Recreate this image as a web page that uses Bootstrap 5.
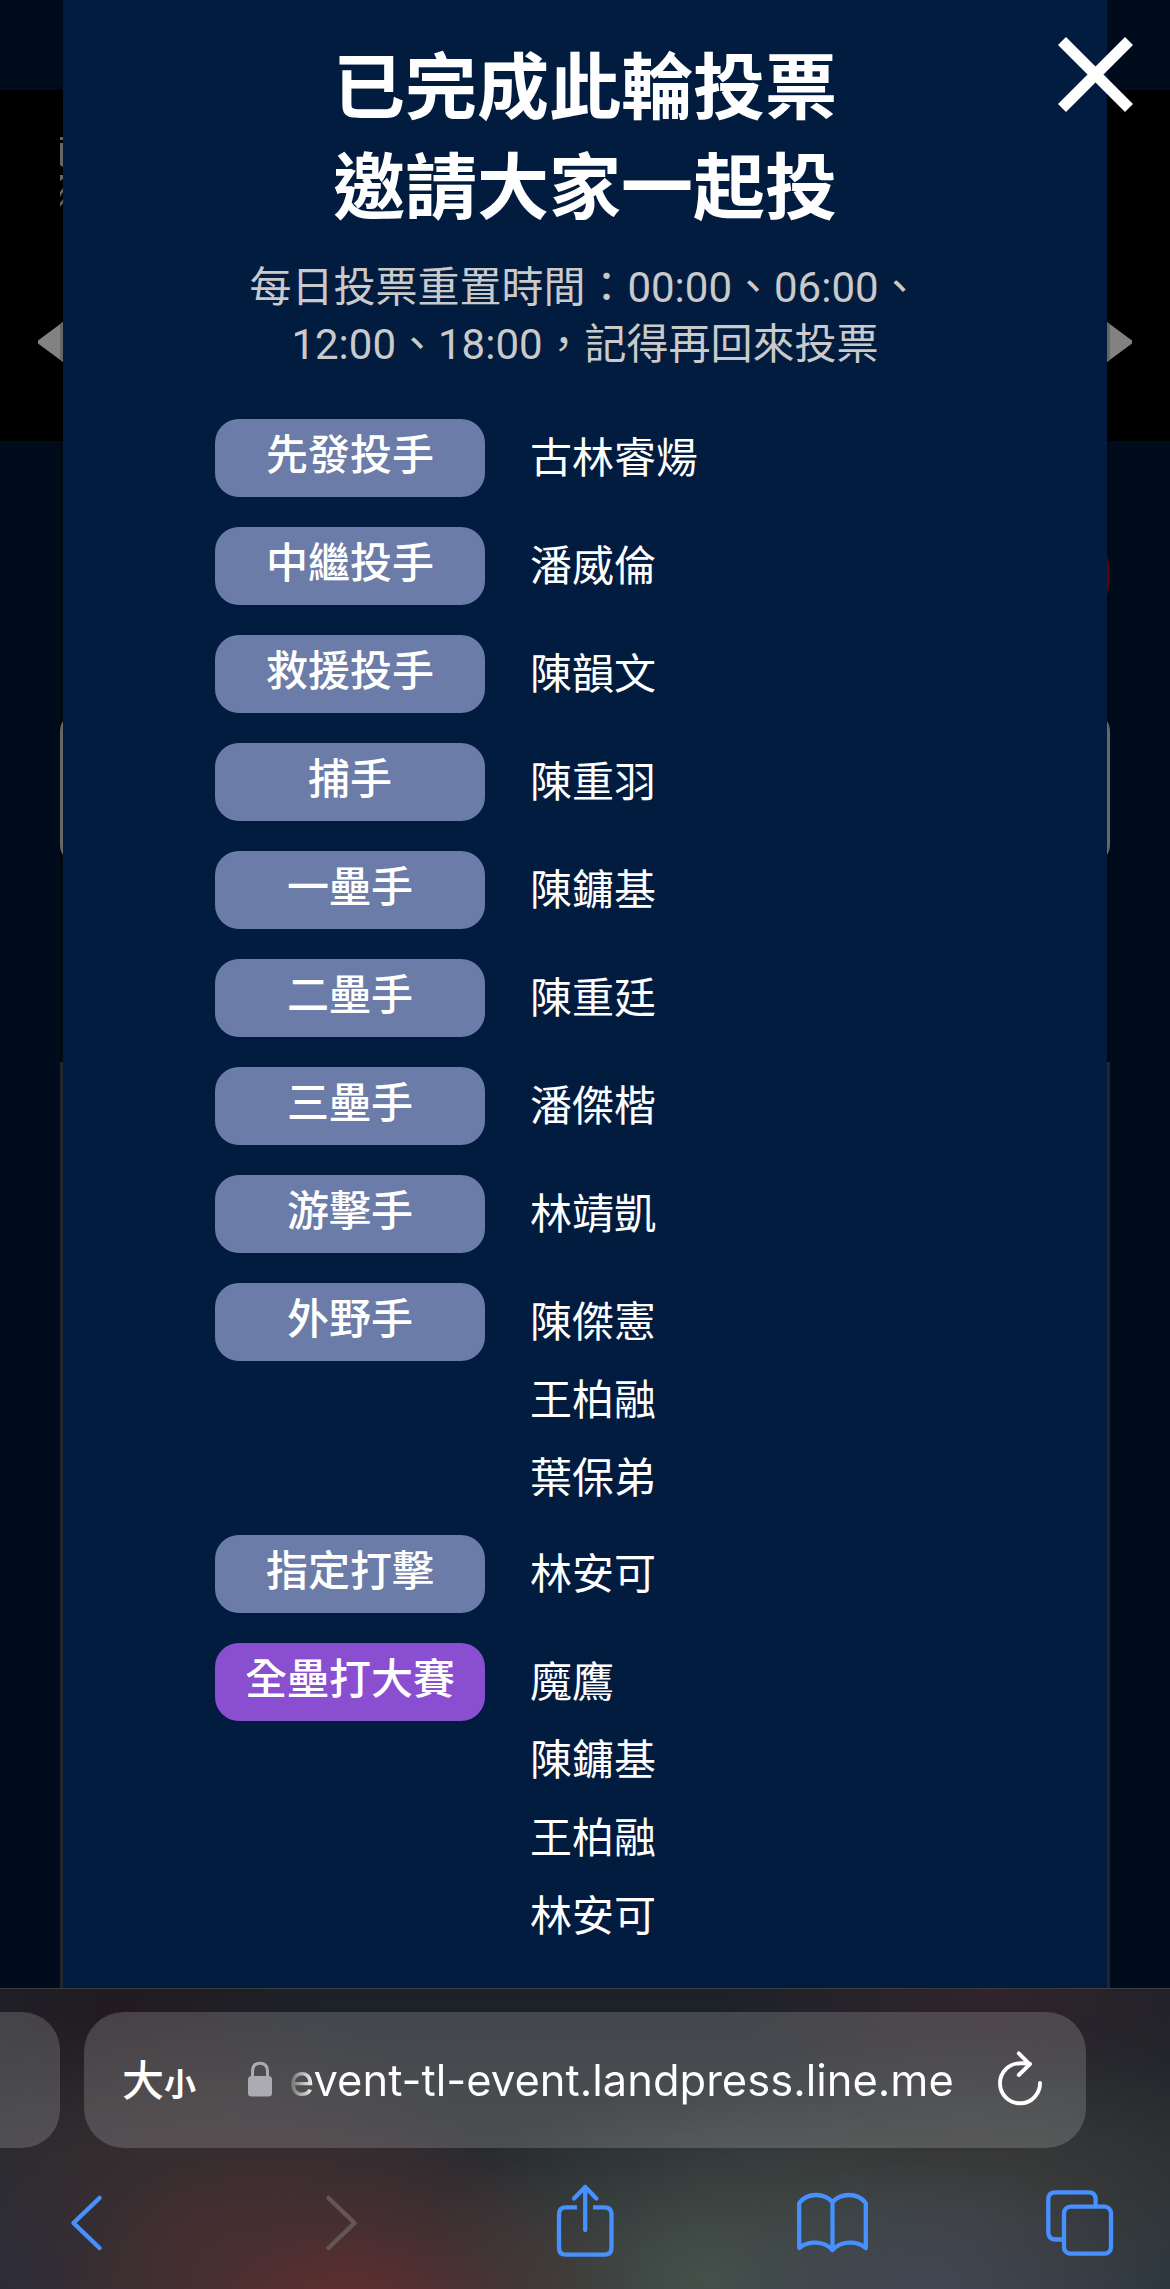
<!DOCTYPE html>
<html lang="zh-Hant">
<head>
<meta charset="utf-8">
<meta name="viewport" content="width=device-width, initial-scale=1">
<title>投票完成</title>
<link href="https://cdn.jsdelivr.net/npm/bootstrap@5.3.0/dist/css/bootstrap.min.css" rel="stylesheet">
<style>
  body { background: #000c1c; color: #fff; font-family: Roboto, "Noto Sans CJK TC", sans-serif; font-size: 42px; }
  .screen { width: 1170px; height: 2289px; }
  .viewport-area { height: 1988px; }

  /* dimmed page behind the dialog */
  .page-behind { z-index: 0; }
  .behind-header { height: 90px; }
  .behind-banner { height: 351px; background: #000; padding: 152px 38px 0; }
  .behind-banner svg { width: 25px; height: 40px; margin-top: 80px; }
  .behind-main { width: 1050px; background: #000810; }
  .behind-button { width: 144px; height: 144px; background: #5c0013; margin-top: 62px; }
  .behind-input { height: 150px; margin-top: 66px; background: #696765; border-radius: 18px; }
  .behind-panel { margin-top: 199px; background: #20262c; }
  .behind-glyphs { left: 60px; top: 137px; width: 3px; height: 70px; z-index: 1; }

  /* dialog */
  .vote-dialog { width: 1044px; background: #021c40; padding: 39px 0 0; z-index: 2; }
  .vote-title { font-size: 72px; line-height: 99.5px; font-weight: 700; margin: 0; }
  .vote-note { width: 760px; line-height: 57px; color: #cacaca; margin: 21px 0 0; }
  .vote-list { padding: 46px 152px 0; }
  .vote-row { margin-bottom: 18px; gap: 45px; }
  .position-pill { width: 270px; height: 78px; margin-bottom: 12px; border-radius: 24px; background: #6c7ca8; font-weight: 500; line-height: 73px; }
  .position-pill.derby { background: #8a4fd0; }
  .player { height: 78px; line-height: 79px; }
  .dialog-close { left: 1058px; top: 37px; width: 75px; height: 75px; z-index: 3; }

  /* browser chrome */
  .browser-bar { height: 301px; border-top: 1px solid #3c3d42; padding-top: 23px; z-index: 4;
    background:
      radial-gradient(ellipse 300px 190px at 350px 325px, rgba(104,46,46,.95), rgba(86,48,48,.5) 50%, transparent),
      radial-gradient(ellipse 230px 150px at 930px 320px, rgba(66,72,88,.9), transparent),
      radial-gradient(ellipse 300px 190px at 710px 290px, rgba(70,82,76,.95), transparent),
      radial-gradient(ellipse 280px 110px at 990px 0, rgba(50,36,44,.95), transparent),
      radial-gradient(ellipse 340px 200px at 970px 230px, rgba(66,66,64,.85), transparent),
      radial-gradient(ellipse 300px 220px at 200px 230px, rgba(62,46,48,.9), transparent),
      radial-gradient(ellipse 150px 150px at 0 301px, rgba(38,42,60,.9), transparent),
      radial-gradient(ellipse 220px 120px at 1170px 301px, rgba(36,52,66,.9), transparent),
      radial-gradient(ellipse 200px 130px at 120px 20px, rgba(34,26,32,.9), transparent),
      linear-gradient(#1c2127, #272a2e 50%, #2c3135); }
  .tab-peek { width: 60px; height: 136px; border-radius: 0 38px 38px 0; background: rgba(255,255,255,.17); }
  .address-field { width: 1002px; height: 136px; margin-left: 24px; border-radius: 40px; background: rgba(255,255,255,.17); }
  .text-size { font-family: "Noto Sans CJK TC", sans-serif; font-weight: 500; margin-left: 38px; width: 80px; white-space: nowrap; line-height: 60px; }
  .text-size .big { font-size: 42px; }
  .text-size .tiny { font-size: 32px; font-weight: 700; }
  .lock-icon { width: 24px; height: 36px; margin-left: 46px; margin-top: -2px; }
  .url-text { font-family: Inter, sans-serif; font-size: 43.5px; letter-spacing: 0; margin-left: 17px; width: 670px; line-height: 60px; white-space: nowrap;
    background: linear-gradient(90deg, rgba(255,255,255,.15), #fff 26px); -webkit-background-clip: text; background-clip: text; color: transparent; }
  .reload-icon { width: 50px; height: 62px; margin-left: 36px; }
  .toolbar-icons { gap: 148px; padding: 25px 36px 0; }
  .toolbar-icons svg { width: 100px; height: 100px; flex: none; }
</style>
</head>
<body>
<div class="screen position-relative overflow-hidden">

  <div class="page-behind position-absolute top-0 start-0 w-100 h-100 d-flex flex-column" aria-hidden="true">
    <div class="behind-header"></div>
    <div class="behind-banner d-flex justify-content-between align-items-start flex-shrink-0">
      <svg viewBox="0 0 25 40"><path d="M0 18.5 25 0V40L0 21.5Z" fill="#828282"/><path d="M22 2.2 25 0V40L22 37.8Z" fill="#666"/></svg>
      <svg viewBox="0 0 25 40"><path d="M25 18.5 0 0V40L25 21.5Z" fill="#828282"/><path d="M3 2.2 0 0V40L3 37.8Z" fill="#666"/></svg>
    </div>
    <div class="behind-main flex-grow-1 mx-auto d-flex flex-column">
      <div class="behind-button rounded-circle ms-auto flex-shrink-0"></div>
      <div class="behind-input flex-shrink-0"></div>
      <div class="behind-panel flex-grow-1"></div>
    </div>
  </div>
  <svg class="behind-glyphs position-absolute" viewBox="0 0 3 70" aria-hidden="true"><path d="M0 0h3v3H0ZM0 6h3v24L0 28ZM0 38h3v4L0 44ZM0 55 3 51v4L0 60ZM0 66 3 62v4L0 70Z" fill="#666"/></svg>

  <div class="viewport-area position-relative">
    <section class="vote-dialog position-relative h-100 mx-auto" role="dialog">
      <div class="d-flex flex-column align-items-center text-center">
        <h1 class="vote-title">已完成此輪投票<br>邀請大家一起投</h1>
        <p class="vote-note">每日投票重置時間：00:00、06:00、<br>12:00、18:00，記得再回來投票</p>
      </div>
      <div class="vote-list">
        <div class="vote-row d-flex"><div class="position-pill text-center">先發投手</div><div><div class="player">古林睿煬</div></div></div>
        <div class="vote-row d-flex"><div class="position-pill text-center">中繼投手</div><div><div class="player">潘威倫</div></div></div>
        <div class="vote-row d-flex"><div class="position-pill text-center">救援投手</div><div><div class="player">陳韻文</div></div></div>
        <div class="vote-row d-flex"><div class="position-pill text-center">捕手</div><div><div class="player">陳重羽</div></div></div>
        <div class="vote-row d-flex"><div class="position-pill text-center">一壘手</div><div><div class="player">陳鏞基</div></div></div>
        <div class="vote-row d-flex"><div class="position-pill text-center">二壘手</div><div><div class="player">陳重廷</div></div></div>
        <div class="vote-row d-flex"><div class="position-pill text-center">三壘手</div><div><div class="player">潘傑楷</div></div></div>
        <div class="vote-row d-flex"><div class="position-pill text-center">游擊手</div><div><div class="player">林靖凱</div></div></div>
        <div class="vote-row d-flex"><div class="position-pill text-center">外野手</div><div><div class="player">陳傑憲</div><div class="player">王柏融</div><div class="player">葉保弟</div></div></div>
        <div class="vote-row d-flex"><div class="position-pill text-center">指定打擊</div><div><div class="player">林安可</div></div></div>
        <div class="vote-row d-flex"><div class="position-pill derby text-center">全壘打大賽</div><div><div class="player">魔鷹</div><div class="player">陳鏞基</div><div class="player">王柏融</div><div class="player">林安可</div></div></div>
      </div>
    </section>
    <button type="button" class="dialog-close btn p-0 border-0 position-absolute d-flex" aria-label="關閉">
      <svg width="75" height="75" viewBox="0 0 75 75"><path d="M4 4 71 71M71 4 4 71" stroke="#fff" stroke-width="11.3" fill="none"/></svg>
    </button>
  </div>

  <footer class="browser-bar position-relative">
    <div class="d-flex">
      <div class="tab-peek"></div>
      <div class="address-field d-flex align-items-center">
        <div class="text-size"><span class="big">大</span><span class="tiny">小</span></div>
        <svg class="lock-icon" viewBox="0 0 24 36"><path d="M4.5 17V10.5C4.5 5 7.5 2.2 12 2.2s7.500 2.800 7.500 8.300V17" fill="none" stroke="#acabb2" stroke-width="3"/><rect y="15" width="24" height="20.500" rx="3.500" fill="#acabb2"/></svg>
        <div class="url-text">event-tl-event.landpress.line.me</div>
        <svg class="reload-icon" viewBox="995 2049 50 62"><path d="M1040 2083A20 20 0 1 1 1020 2063.300Q1025 2063 1030 2064M1018.800 2053.300 1029.700 2064.300 1018.800 2075" fill="none" stroke="#fff" stroke-width="3.900" stroke-linecap="round" stroke-linejoin="round"/></svg>
      </div>
    </div>
    <div class="toolbar-icons d-flex">
      <svg viewBox="36 2173 100 100"><path d="M99.500 2198 73.500 2223 99.500 2248" fill="none" stroke="#4691ff" stroke-width="4.500" stroke-linecap="round" stroke-linejoin="round"/></svg>
      <svg viewBox="284 2173 100 100"><path d="M328.500 2198 354.500 2223 328.500 2248" fill="none" stroke="#655553" stroke-width="4.500" stroke-linecap="round" stroke-linejoin="round"/></svg>
      <svg viewBox="532 2173 100 100" fill="none" stroke="#4691ff" stroke-width="4.300"><path d="M577 2207.300H566Q559 2207.300 559 2214.300V2247.500Q559 2254.700 566 2254.700H604.500Q611.500 2254.700 611.500 2247.500V2214.300Q611.500 2207.300 604.500 2207.300H593"/><path d="M585.200 2230V2187M574 2198.500 585.200 2187 596.400 2198.500" stroke-linecap="round" stroke-linejoin="round"/></svg>
      <svg viewBox="780 2173 100 100" fill="none" stroke="#4691ff" stroke-width="4.300" stroke-linejoin="round"><path d="M832.500 2202C824 2193 808 2192 799.200 2203V2248C808 2240.500 824 2240.500 832.500 2250C841 2240.500 857 2240.500 865.800 2248V2203C857 2192 841 2193 832.500 2202ZM832.500 2202V2250"/></svg>
      <svg viewBox="1028 2173 100 100" fill="none" stroke="#4691ff" stroke-width="4.300"><path d="M1062 2239.500H1055.500Q1048.300 2239.500 1048.300 2232.300V2199.500Q1048.300 2192.300 1055.500 2192.300H1088.500Q1095.600 2192.300 1095.600 2199.500V2205"/><rect x="1064" y="2206.700" width="47" height="47" rx="6.500"/></svg>
    </div>
  </footer>
</div>
<script src="https://cdn.jsdelivr.net/npm/bootstrap@5.3.0/dist/js/bootstrap.bundle.min.js"></script>
</body>
</html>
